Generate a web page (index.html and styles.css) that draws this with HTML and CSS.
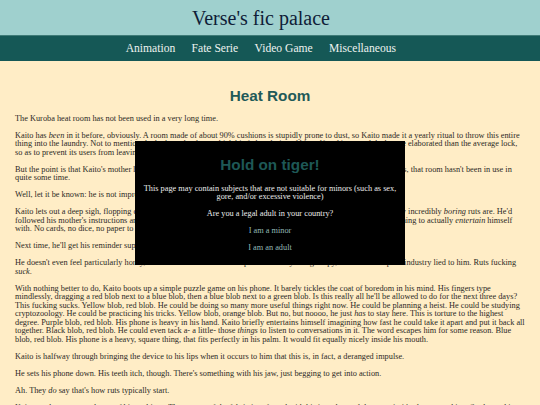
FILE: index.html
```html
<!DOCTYPE html>
<html lang="en">
<head>
<meta charset="utf-8">
<title>Heat Room — Verse's fic palace</title>
<link rel="stylesheet" href="styles.css">
</head>
<body class="page is-locked">
  <header class="site-header">
    <h1 class="site-title">Verse's fic palace</h1>
  </header>
  <nav class="site-nav">
    <a class="nav-link" href="#">Animation</a>
    <a class="nav-link" href="#">Fate Serie</a>
    <a class="nav-link" href="#">Video Game</a>
    <a class="nav-link" href="#">Miscellaneous</a>
  </nav>

  <main class="story">
    <h2 class="story-title">Heat Room</h2>
    <p>The Kuroba heat room has not been used in a very long time.</p>
    <p>Kaito has <em>been</em> in it before, obviously. A room made of about 90% cushions is stupidly prone to dust, so Kaito made it a yearly ritual to throw this entire thing into the laundry. Not to mention the lock on the door, which his father designed himself and is a good deal more elaborated than the average lock, so as to prevent its users from leaving while they're not in their right mind.</p>
    <p>But the point is that Kaito's mother hasn't needed it in years, and with Kaito's cycles kept in check by his suppressions, that room hasn't been in use in quite some time.</p>
    <p>Well, let it be known: he is not impressed.</p>
    <p>Kaito lets out a deep sigh, flopping onto the big pile of cushions by the far wall. He had forgotten, somehow, just how incredibly <em>boring</em> ruts are. He'd followed his mother's instructions and left everything that could be a danger to himself outside, meaning he's got nothing to actually <em>entertain</em> himself with. No cards, no dice, no paper to fold.</p>
    <p>Next time, he'll get his reminder supplies ready before it hits.</p>
    <p>He doesn't even feel particularly horny, which is somehow the worst part. Just antsy and grumpy, like the entire porn industry lied to him. Ruts fucking <em>suck</em>.</p>
    <p>With nothing better to do, Kaito boots up a simple puzzle game on his phone. It barely tickles the coat of boredom in his mind. His fingers type mindlessly, dragging a red blob next to a blue blob, then a blue blob next to a green blob. Is this really all he'll be allowed to do for the next three days? This fucking sucks. Yellow blob, red blob. He could be doing so many more useful things right now. He could be planning a heist. He could be studying cryptozoology. He could be practicing his tricks. Yellow blob, orange blob. But no, but noooo, he just <em>has</em> to stay here. This is torture to the highest degree. Purple blob, red blob. His phone is heavy in his hand. Kaito briefly entertains himself imagining how fast he could take it apart and put it back all together. Black blob, red blob. He could even tack a- a little- those <em>things</em> to listen to conversations in it. The word escapes him for some reason. Blue blob, red blob. His phone is a heavy, square thing, that fits perfectly in his palm. It would fit equally nicely inside his mouth.</p>
    <p>Kaito is halfway through bringing the device to his lips when it occurs to him that this is, in fact, a deranged impulse.</p>
    <p>He sets his phone down. His teeth itch, though. There's something with his jaw, just begging to get into action.</p>
    <p>Ah. They <em>do</em> say that's how ruts typically start.</p>
    <p>Kaito reaches out to grab one of his cushions. The texture of the fabric is soft, and with his jaw clamped down on it, it's almost soothing. So the cushion ends up in his mouth.</p>
  </main>

  <div class="age-gate" role="dialog" aria-modal="true" aria-labelledby="gate-title">
    <div class="gate-box">
      <h2 class="gate-title" id="gate-title">Hold on tiger!</h2>
      <p class="gate-text">This page may contain subjects that are not suitable for minors (such as sex, gore, and/or excessive violence)</p>
      <p class="gate-text">Are you a legal adult in your country?</p>
      <p class="gate-choice"><a class="gate-link" href="#">I am a minor</a></p>
      <p class="gate-choice"><a class="gate-link" href="#">I am an adult</a></p>
    </div>
  </div>
</body>
</html>
```

FILE: styles.css
```css
html, body {
  margin: 0;
  padding: 0;
}

.page {
  background: #ffedc6;
  color: #2c2925;
  font-family: "Liberation Serif", "Times New Roman", serif;
}

/* scrolling is frozen while the age gate is open */
.is-locked {
  overflow: hidden;
  height: 100vh;
}

/* ---------- header ---------- */
.site-header {
  background: #9fd0ce;
  height: 35px;
  display: flex;
  align-items: center;
  justify-content: center;
  padding-right: 18px;
}

.site-title {
  margin: 0;
  font-family: "Liberation Serif", serif;
  font-weight: normal;
  font-size: 20px;
  line-height: 24px;
  color: #0f1d38;
}

.site-nav {
  background: #155856;
  border-top: 1px solid #3f7b78;
  height: 25px;
  display: flex;
  align-items: center;
  justify-content: center;
  padding-right: 2px;
}

.nav-link {
  font-family: "Liberation Serif", serif;
  font-size: 11.6px;
  color: #eef3f0;
  text-decoration: none;
  margin-right: 16.3px;
}

/* ---------- story ---------- */
.story {
  padding: 0 15px;
  font-size: 8.3px;
  line-height: 8.5px;
}

.story p {
  margin: 8.5px 0;
}

.story-title {
  margin: 25.5px 0 11.25px;
  text-align: center;
  font-family: "Liberation Sans", Arial, sans-serif;
  font-size: 15.3px;
  line-height: 17px;
  color: #1f5a58;
}

/* ---------- age gate ---------- */
.age-gate {
  position: fixed;
  inset: 0;
  display: flex;
  align-items: center;
  justify-content: center;
}

.gate-box {
  width: 270px;
  box-sizing: border-box;
  padding: 0 6px 3.5px;
  background: #000;
  color: #ececec;
  text-align: center;
  font-size: 8.3px;
  line-height: 8.5px;
}

.gate-title {
  margin: 15.5px 0 11.5px;
  font-family: "Liberation Sans", Arial, sans-serif;
  font-size: 15.3px;
  line-height: 17px;
  color: #1e5856;
}

.gate-text,
.gate-choice {
  margin: 0 0 8.5px;
}

.gate-link {
  color: #93b9b7;
  text-decoration: none;
}
```
